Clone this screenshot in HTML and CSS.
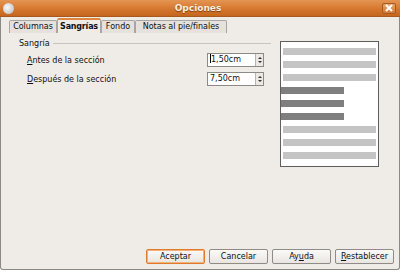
FILE: index.html
```html
<!DOCTYPE html><html lang="es">
<head>
  <meta charset="UTF-8">
  <title>Opciones</title>
  <link rel="stylesheet" href="styles.css">
</head>
<body>
  <div class="window">
    <header class="titlebar">
      <span class="app-icon"></span>
      <span class="title">Opciones</span>
      <span class="close">
        <svg width="8" height="8" viewBox="0 0 8 8"><path d="M1 1L7 7M7 1L1 7" stroke="#fff" stroke-width="2"/></svg>
      </span>
    </header>

    <nav class="tabs">
      <span class="tab tab-col">Columnas</span>
      <span class="tab tab-sang active">Sangrías</span>
      <span class="tab tab-fondo">Fondo</span>
      <span class="tab tab-notas">Notas al pie/finales</span>
    </nav>

    <main class="panel">
      <section class="frame">
        <div class="frame-title"><span>Sangría</span></div>
        <div class="row">
          <label><u>A</u>ntes de la sección</label>
          <div class="spin"><span class="spin-text"><i class="cursor"></i>1,50cm</span><span class="spin-btn"><b class="up"></b><b class="down"></b></span></div>
        </div>
        <div class="row">
          <label><u>D</u>espués de la sección</label>
          <div class="spin"><span class="spin-text">7,50cm</span><span class="spin-btn"><b class="up"></b><b class="down"></b></span></div>
        </div>
      </section>

      <div class="preview">
        <div class="bar light"></div>
        <div class="bar light"></div>
        <div class="bar light"></div>
        <div class="bar dark"></div>
        <div class="bar dark"></div>
        <div class="bar dark"></div>
        <div class="bar light"></div>
        <div class="bar light"></div>
        <div class="bar light"></div>
      </div>
    </main>

    <footer class="buttons">
      <button class="default">Aceptar</button>
      <button>Cancelar</button>
      <button>Ay<u>u</u>da</button>
      <button><u>R</u>establecer</button>
    </footer>
  </div>
</body>
</html>
```

FILE: styles.css
```css
body { margin: 0; font-family: "DejaVu Sans", sans-serif; font-size: 8px; color: #101010; background: #fff; }
.window { width: 400px; height: 270px; box-sizing: border-box; border: 1px solid #8c8882; border-top: none; border-radius: 0 0 3px 3px; background: #efebe7; display: flex; flex-direction: column; }

.titlebar { height: 17px; margin: 0 -1px; display: flex; align-items: center; padding: 0 3px; background: linear-gradient(#e39553, #d5752b 60%, #c5661f); border-bottom: 1px solid #a85a1e; box-sizing: border-box; }
.app-icon { width: 11px; height: 11px; border-radius: 50%; background: radial-gradient(circle at 40% 40%, #fafafa, #c9c9c9 70%, #8a8a8a); }
.title { flex: 1; text-align: center; font-weight: bold; font-size: 9px; color: #fbeee0; text-shadow: 0 1px 1px #7a3e10; }
.close { width: 14px; height: 11px; display: flex; align-items: center; justify-content: center; border: 1px solid #a65a20; border-radius: 2px; background: linear-gradient(#e8a468, #d07a36); box-sizing: border-box; margin-right: 1px; }

.tabs { display: flex; align-items: flex-end; height: 15px; margin-top: 1px; padding-left: 8px; }
.tab { box-sizing: border-box; height: 13px; line-height: 12px; text-align: center; border: 1px solid #a9a5a0; border-bottom: none; border-radius: 2px 2px 0 0; background: #e5e1dc; }
.tab-col { width: 48px; }
.tab-sang { width: 44px; }
.tab-fondo { width: 34px; }
.tab-notas { width: 92px; }
.tab.active { height: 15px; line-height: 13px; background: #efebe7; font-weight: bold; border-top: 2px solid #e0853d; letter-spacing: -0.2px; }

.panel { flex: 1; display: flex; padding: 4px 20px 0 18px; }
.frame { flex: 1; margin-right: 9px; }
.frame-title { display: flex; align-items: center; height: 10px; margin-top: 1px; }
.frame-title::after { content: ""; flex: 1; height: 1px; background: #c8c4bf; margin-left: 3px; }
.row { display: flex; align-items: center; justify-content: space-between; height: 14px; margin-top: 5px; padding-left: 8px; padding-right: 7px; }

.spin { width: 57px; height: 14px; box-sizing: border-box; display: flex; border: 1px solid #8d8a86; background: #fff; }
.spin-text { flex: 1; line-height: 12px; padding-left: 2px; }
.cursor { display: inline-block; width: 1px; height: 9px; background: #000; vertical-align: -1px; }
.spin-btn { width: 7px; border-left: 1px solid #b8b4af; background: #ece8e3; display: flex; flex-direction: column; align-items: center; justify-content: center; gap: 2px; }
.spin-btn b { width: 0; height: 0; border-left: 2px solid transparent; border-right: 2px solid transparent; }
.spin-btn .up { border-bottom: 2px solid #333; }
.spin-btn .down { border-top: 2px solid #333; }

.preview { width: 99px; height: 126px; box-sizing: border-box; margin-top: 4px; border: 1px solid #5f5f5f; background: #fff; padding: 6px 2px 0 0; display: flex; flex-direction: column; gap: 6px; }
.bar { height: 7px; }
.bar.light { background: #c4c4c4; margin-left: 2px; }
.bar.dark { background: #7f7f7f; width: 63px; }

.buttons { display: flex; justify-content: flex-end; gap: 4px; padding: 0 5px 5px 0; }
.buttons button { font-family: inherit; font-size: 8px; color: #101010; width: 59px; height: 15px; padding: 0; border: 1px solid #8f8b86; border-radius: 2px; background: linear-gradient(#fbfaf9, #e9e5e0); }
.buttons button.default { border-color: #e07a2c; box-shadow: inset 0 0 0 1px #f3b07a; }
```
